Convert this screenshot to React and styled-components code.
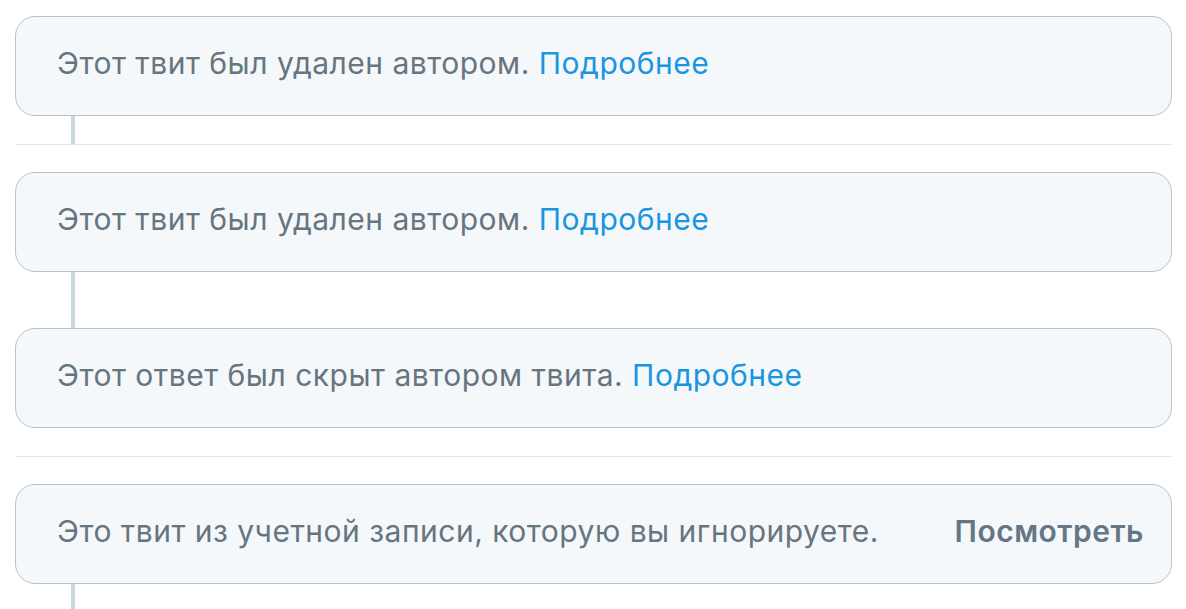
import React from "react";
import styled, { createGlobalStyle } from "styled-components";

const Global = createGlobalStyle`
  html, body { margin: 0; padding: 0; background: #ffffff; }
  body { font-family: Inter, "Liberation Sans", Arial, sans-serif; overflow: hidden; }
`;

const List = styled.div`
  width: 1157px;
  margin-left: 15px;
  padding-top: 16px;
`;

const Group = styled.div`
  padding-top: ${(p) => (p.$first ? "0" : "27px")};
  border-bottom: ${(p) => (p.$last ? "none" : "1px solid #e1e8ed")};
`;

const Card = styled.div`
  box-sizing: border-box;
  height: 100px;
  display: flex;
  align-items: center;
  justify-content: space-between;
  padding: 0 27px 7px 41px;
  background: #f5f8fa;
  border: 1px solid #b8c4cc;
  border-radius: 20px;
  font-size: 30px;
  letter-spacing: 0.5px;
  color: #66757f;
`;

const Notice = styled.span`
  white-space: nowrap;
`;

const Link = styled.a`
  color: #1b95e0;
  text-decoration: none;
`;

const ViewButton = styled.span`
  font-weight: 600;
  color: #657786;
`;

const Thread = styled.div`
  width: 4px;
  height: ${(p) => p.$h}px;
  margin-left: 56px;
  background: ${(p) => (p.$hidden ? "transparent" : "#ccd6dd")};
`;

function TweetCard({ text, link, action }) {
  return (
    <Card>
      <Notice>
        {text}
        {link && (
          <>
            {" "}
            <Link href="#">{link}</Link>
          </>
        )}
      </Notice>
      {action && <ViewButton>{action}</ViewButton>}
    </Card>
  );
}

export default function App() {
  return (
    <>
      <Global />
      <List>
        <Group $first>
          <TweetCard text="Этот твит был удален автором." link="Подробнее" />
          <Thread $h={28} />
        </Group>
        <Group>
          <TweetCard text="Этот твит был удален автором." link="Подробнее" />
          <Thread $h={56} />
          <TweetCard text="Этот ответ был скрыт автором твита." link="Подробнее" />
          <Thread $h={28} $hidden />
        </Group>
        <Group $last>
          <TweetCard
            text="Это твит из учетной записи, которую вы игнорируете."
            action="Посмотреть"
          />
          <Thread $h={40} />
        </Group>
      </List>
    </>
  );
}
